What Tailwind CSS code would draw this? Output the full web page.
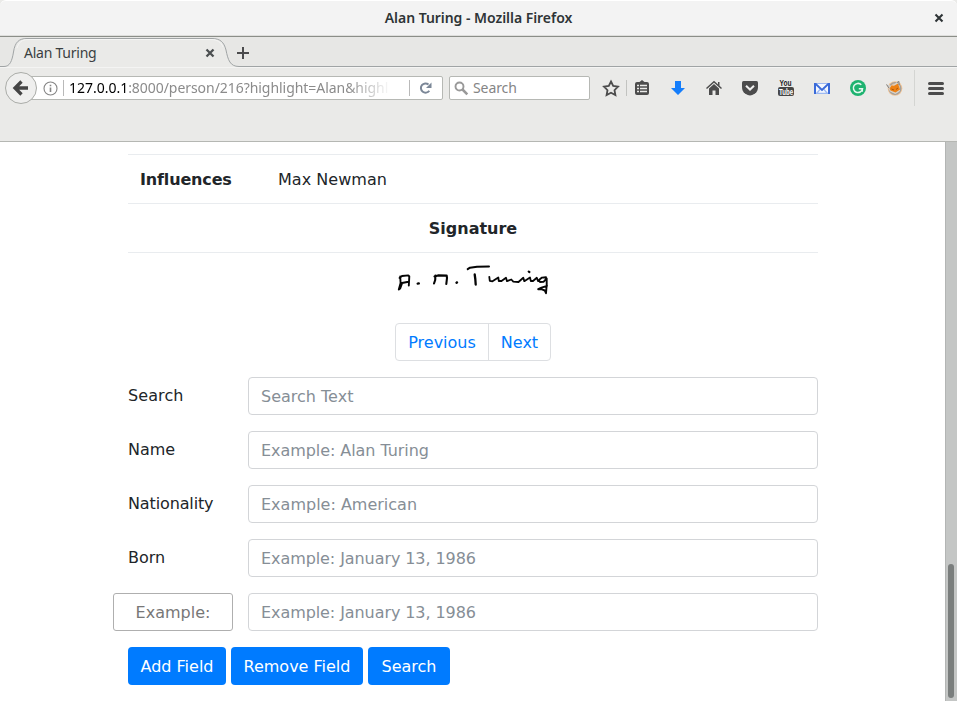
<!DOCTYPE html>
<html lang="en">
<head>
<meta charset="utf-8">
<title>Alan Turing</title>
<script src="https://cdn.jsdelivr.net/npm/@tailwindcss/browser@4"></script>
</head>
<body class="w-[957px] h-[701px] overflow-hidden bg-white flex flex-col text-[#212529] font-['DejaVu_Sans',sans-serif]">
<header class="shrink-0 h-[142px] flex flex-col bg-[#eaeae8] border-b border-[#b5b7b3] font-['Noto_Sans',sans-serif] text-[14px]">
  <div class="h-[37px] shrink-0 bg-[#f3f3f3] border-t border-t-white border-b border-b-[#8b8e88] shadow-[inset_0_-1px_0_#dededc] rounded-t-[6px] relative flex justify-center items-center">
    <span class="font-semibold text-[#2e3436] tracking-[-0.04px] whitespace-nowrap pb-[2px]">Alan Turing - Mozilla Firefox</span>
    <svg class="absolute left-[934px] top-[12px]" width="10" height="10" viewBox="0 0 10 10"><path d="M1.5 1.5 8.5 8.5M8.5 1.5 1.5 8.5" stroke="#2e3436" stroke-width="2.1"/></svg>
  </div>
  <div class="h-[30px] shrink-0 relative bg-[#e7e7e5] flex items-center">
    <svg class="absolute left-0 top-0" width="957" height="30" viewBox="0 0 957 30">
      <path d="M0 29.5H4C10 29.5 12 24 13.500 15C15 5 19 1.500 27 1.500H212C220 1.500 224 5 226 13C228 23 230 29.500 239 29.500H957V31H0Z" fill="#eaeae8"/>
      <path d="M0 29.500H4C10 29.500 12 24 13.500 15C15 5 19 1.500 27 1.500H212C220 1.500 224 5 226 13C228 23 230 29.500 239 29.500H957" fill="none" stroke="#a0a4a5"/>
      <path d="M17 11C19 5 22 2.500 28 2.500H211C217 2.500 221 5 223 10" fill="none" stroke="#f5f5f4"/>
      <path d="M206.500 12.500 213.500 19.500M213.500 12.500 206.500 19.500" stroke="#4b4f51" stroke-width="2.300"/>
      <path d="M237 16H249M243 10V22" stroke="#4b4b4d" stroke-width="2"/>
    </svg>
    <span class="relative pl-[24px] pt-px text-[#3a3f41] tracking-[-0.24px]">Alan Turing</span>
  </div>
  <div class="h-[42px] shrink-0 flex items-start pt-[8px] relative border-t border-[#f4f4f3]">
    <div class="ml-[30px] w-[413px] h-[24px] bg-white border border-[#b6b8b4] rounded-r-[2px] flex items-center">
      <svg class="ml-[12px]" width="15" height="15" viewBox="0 0 15 15"><circle cx="7.500" cy="7.500" r="6.500" fill="none" stroke="#858585" stroke-width="1.100"/><path d="M7.500 6.500V11M7.500 3.700V5.200" stroke="#858585" stroke-width="1.600"/></svg>
      <div class="w-px h-[16px] bg-[#b9b9b9] ml-[5px]"></div>
      <div class="ml-[5px] w-[319px] whitespace-nowrap leading-[22px] text-[#8b8b8b] tracking-[-0.05px] mask-r-from-[285px] mask-r-to-[319px] [mask-image:linear-gradient(to_right,black_278px,transparent_322px)]"><span class="text-black tracking-[-0.02px]">127.0.0.1</span>:8000/person/216?highlight=Alan&amp;highl</div>
      <div class="w-px h-[16px] bg-[#b9b9b9] ml-[21px]"></div>
      <svg class="ml-[9px]" width="14" height="14" viewBox="0 0 14 14"><path d="M10.300 9.700A4.600 4.600 0 1 1 9.500 3.600" fill="none" stroke="#7b8797" stroke-width="2"/><path d="M12.500 1.500V7H7Z" fill="#7b8797"/></svg>
    </div>
    <svg class="absolute left-[4px] top-[3px]" width="34" height="34" viewBox="0 0 34 34"><circle cx="17" cy="17" r="15.500" fill="#efefee" stroke="#aaaca8"/><path d="M17.500 10.500 11 17 17.500 23.500M11.500 17H24" fill="none" stroke="#454545" stroke-width="3.300"/></svg>
    <div class="ml-[6px] w-[141px] h-[24px] bg-white border border-[#b6b8b4] rounded-[2px] flex items-center">
      <svg class="ml-[4px]" width="15" height="15" viewBox="0 0 15 15"><circle cx="5.500" cy="5.500" r="4" fill="none" stroke="#999" stroke-width="1.900"/><path d="M8.500 8.500 13.300 13.300" stroke="#999" stroke-width="2.500"/></svg>
      <span class="ml-[4px] pb-[2px] text-[#858585] tracking-[-0.1px]">Search</span>
    </div>
    <svg class="absolute left-[590px] top-0" width="367" height="40" viewBox="590 68 367 40">
      <path d="M611 81.500 613.200 86 618 86.700 614.500 90.200 615.400 95 611 92.700 606.600 95 607.500 90.200 604 86.700 608.800 86Z" fill="none" stroke="#4c4c4c" stroke-width="1.800"/>
      <path d="M626.500 80V96" stroke="#c2c3c0"/>
      <path d="M637 82H639.500L642 80 644.500 82H647Q649 82 649 84V93Q649 95 647 95H637Q635 95 635 93V84Q635 82 637 82Z" fill="#4c4c4c"/>
      <path d="M637 85.500H639M640 85.500H647M637 88.500H639M640 88.500H647M637 91.500H639M640 91.500H647" stroke="#eaeae8" stroke-width="1.400"/>
      <path d="M675 81H681V88H685L678 95 671 88H675Z" fill="#157efb"/>
      <path d="M706.500 88.500 714 81.800 721.500 88.500" fill="none" stroke="#4c4c4c" stroke-width="1.500"/>
      <path d="M709 88.500 714 84 719 88.500V95H715.500V90.500H712.500V95H709Z" fill="#4c4c4c"/>
      <path d="M718 82H719.500V86L718 84.700Z" fill="#4c4c4c"/>
      <path d="M743.500 81H756.500Q758 81 758 82.500V87Q758 91 755 93.500 752 95.500 750 95.500 748 95.500 745 93.500 742 91 742 87V82.500Q742 81 743.500 81Z" fill="#4c4c4c"/>
      <path d="M746 85.700 750 89.500 754 85.700" fill="none" stroke="#f1f1f0" stroke-width="2"/>
      <rect x="778" y="87" width="16" height="9" rx="2" fill="#474747"/>
      <text x="779.500" y="86" font-family="Liberation Sans, sans-serif" font-weight="bold" font-size="9" fill="#1c1c1c" textLength="12" lengthAdjust="spacingAndGlyphs">You</text>
      <text x="779" y="94.700" font-family="Liberation Sans, sans-serif" font-weight="bold" font-size="9" fill="#fff" textLength="14" lengthAdjust="spacingAndGlyphs">Tube</text>
      <rect x="814" y="83" width="16" height="11" fill="#f5f8fe"/>
      <path d="M816 93.400H828M816 83.500H828M816.500 93.500 820 89.500M827.500 93.500 824 89.500" fill="none" stroke="#9db9f2" stroke-width="1.200"/>
      <path d="M815 94V83M829 94V83" fill="none" stroke="#3b6bd9" stroke-width="2"/>
      <path d="M815.500 83.800 822 90 828.500 83.800" fill="none" stroke="#3b6bd9" stroke-width="1.900"/>
      <circle cx="858" cy="88" r="8" fill="#1eb370"/>
      <path d="M861.300 84.800A4.600 4.600 0 1 0 862.500 88.800H858.800M862.300 88.500V91.700" fill="none" stroke="#e6f8ef" stroke-width="1.500"/>
      <circle cx="895" cy="88.500" r="7.300" fill="#f2c394"/>
      <circle cx="895" cy="88.500" r="5.700" fill="none" stroke="#a3a19d" stroke-width="1.600"/>
      <path d="M886 84 892 86 898.500 81 899.500 86.500 900 91 895.500 94 890 91.500Z" fill="#d5d3ce"/>
      <path d="M889.500 88.500 891.500 85.500 894 85.800 898 83.500 900 89.500 895.500 92.500 890.500 90.500Z" fill="#ed8114"/>
      <path d="M891.500 89 894 90M896 89.500 898 88" stroke="#9b4b08" stroke-width=".8"/>
      <path d="M886.500 84.500 889 88M897 82.500 899 81.500V85" fill="none" stroke="#77736e" stroke-width=".9"/>
      <path d="M914.500 70V106" stroke="#d4d5d2"/>
      <path d="M929.500 83.500H942.500M929.500 88.500H942.500M929.500 93.500H942.500" stroke="#4c4c4c" stroke-width="3" stroke-linecap="round"/>
    </svg>
  </div>
</header>
<div class="flex-1 min-h-0 flex">
  <main class="w-[945px] pt-[12px] pl-[128px] overflow-hidden text-[16px] leading-[24px]">
    <section class="w-[690px]">
      <div class="flex h-[49px] border-t border-[#e9ecef] pt-[13px] pl-[12px]"><b class="w-[138px] tracking-[-0.16px]">Influences</b><span class="tracking-[0.04px]">Max Newman</span></div>
      <div class="h-[49px] border-t border-[#e9ecef] pt-[13px] text-center font-bold">Signature</div>
      <div class="h-[71px] border-t border-[#e9ecef] flex justify-center">
        <svg class="mt-[2px] ml-[4px]" width="190" height="60" viewBox="380 255 190 60" fill="none" stroke="#050505" stroke-width="1.900" stroke-linecap="round" stroke-linejoin="round" role="img" aria-label="A. M. Turing">
          <path d="M400.200 276.500 400.600 283 398.800 289.500 400.200 288.500 402 283.500M399.500 278 402 276 408.300 275.400 409.300 276.500 408.800 285.500M402 283 408.500 281.800"/>
          <path d="M417.700 283.600 418.800 283.400M456.500 282.700 457 282.400" stroke-width="2.400"/>
          <path d="M435.400 275.500 435.200 280 434 283.500M434.500 276.500 438 275.400 446.700 275.600 447 278 446.300 284" stroke-width="2.100"/>
          <path d="M467.700 269.200 470 267.700 477 266.700 489 266.600" stroke-width="2"/>
          <path d="M474.700 274.500 475.300 279 475.700 284.500" stroke-width="2.300"/>
          <path d="M489.300 276.800 489.800 280.800 492.500 281.300 498.300 277.500 498.800 281 501.500 281 506 277.800 507 281.200 511.300 279.500 513.300 281.600 518.500 282 523.300 277.800 524.300 281.200 530 277.500 530.800 281 533 281 536.800 277.800 538 281 539.200 281.200" stroke-width="1.800"/>
          <path d="M528.700 271.600 529.400 272" stroke-width="2.200"/>
          <path d="M546 277.300 542 277.600 538.900 280 540 282 543.500 281.800 546.700 278.500 546.700 285 546 293.200 544.800 290.500 541.300 289.200 538.200 289.200 541.500 287.700 547 285.800"/>
        </svg>
      </div>
    </section>
    <nav class="w-[690px] flex justify-center text-[#007bff]">
      <div class="flex h-[38px] border border-[#dddfe2] rounded-[4px]">
        <a class="w-[93px] pt-[7px] text-center border-r border-[#dddfe2]">Previous</a><a class="w-[61px] pt-[7px] text-center">Next</a>
      </div>
    </nav>
    <form class="mt-[16px] w-[690px] flex flex-col gap-[16px]">
      <div class="flex h-[38px]"><label class="w-[120px] pt-[7px] tracking-[0.1px]">Search</label><input class="w-[570px] h-[38px] px-[12px] border border-[#d3d5d8] rounded-[4px] placeholder:text-[#868e96]" placeholder="Search Text"></div>
      <div class="flex h-[38px]"><label class="w-[120px] pt-[7px]">Name</label><input class="w-[570px] h-[38px] px-[12px] border border-[#d3d5d8] rounded-[4px] tracking-[-0.06px] placeholder:text-[#868e96]" placeholder="Example: Alan Turing"></div>
      <div class="flex h-[38px]"><label class="w-[120px] pt-[7px] tracking-[-0.13px]">Nationality</label><input class="w-[570px] h-[38px] px-[12px] border border-[#d3d5d8] rounded-[4px] placeholder:text-[#868e96]" placeholder="Example: American"></div>
      <div class="flex h-[38px]"><label class="w-[120px] pt-[7px]">Born</label><input class="w-[570px] h-[38px] px-[12px] border border-[#d3d5d8] rounded-[4px] tracking-[-0.08px] placeholder:text-[#868e96]" placeholder="Example: January 13, 1986"></div>
      <div class="flex h-[38px] -ml-[15px]"><input class="w-[120px] h-[38px] mr-[15px] text-center border border-[#afafaf] rounded-[3px] placeholder:text-[#777]" placeholder="Example:"><input class="w-[570px] h-[38px] px-[12px] border border-[#d3d5d8] rounded-[4px] tracking-[-0.08px] placeholder:text-[#868e96]" placeholder="Example: January 13, 1986"></div>
      <div class="flex gap-[5px] text-white">
        <button type="button" class="w-[98px] h-[38px] pt-[2px] bg-[#007bff] rounded-[4px] whitespace-nowrap">Add Field</button>
        <button type="button" class="w-[132px] h-[38px] pt-[2px] bg-[#007bff] rounded-[4px] whitespace-nowrap">Remove Field</button>
        <button type="button" class="w-[82px] h-[38px] pt-[2px] bg-[#007bff] rounded-[4px]">Search</button>
      </div>
    </form>
  </main>
  <div class="w-[12px] shrink-0 bg-[#c4c6c5] border-l border-[#b3b5b4] flex flex-col justify-end pl-[2px] pb-[3px]"><div class="w-[6px] h-[134px] rounded-full bg-[#7a7e7d]"></div></div>
</div>
</body>
</html>
